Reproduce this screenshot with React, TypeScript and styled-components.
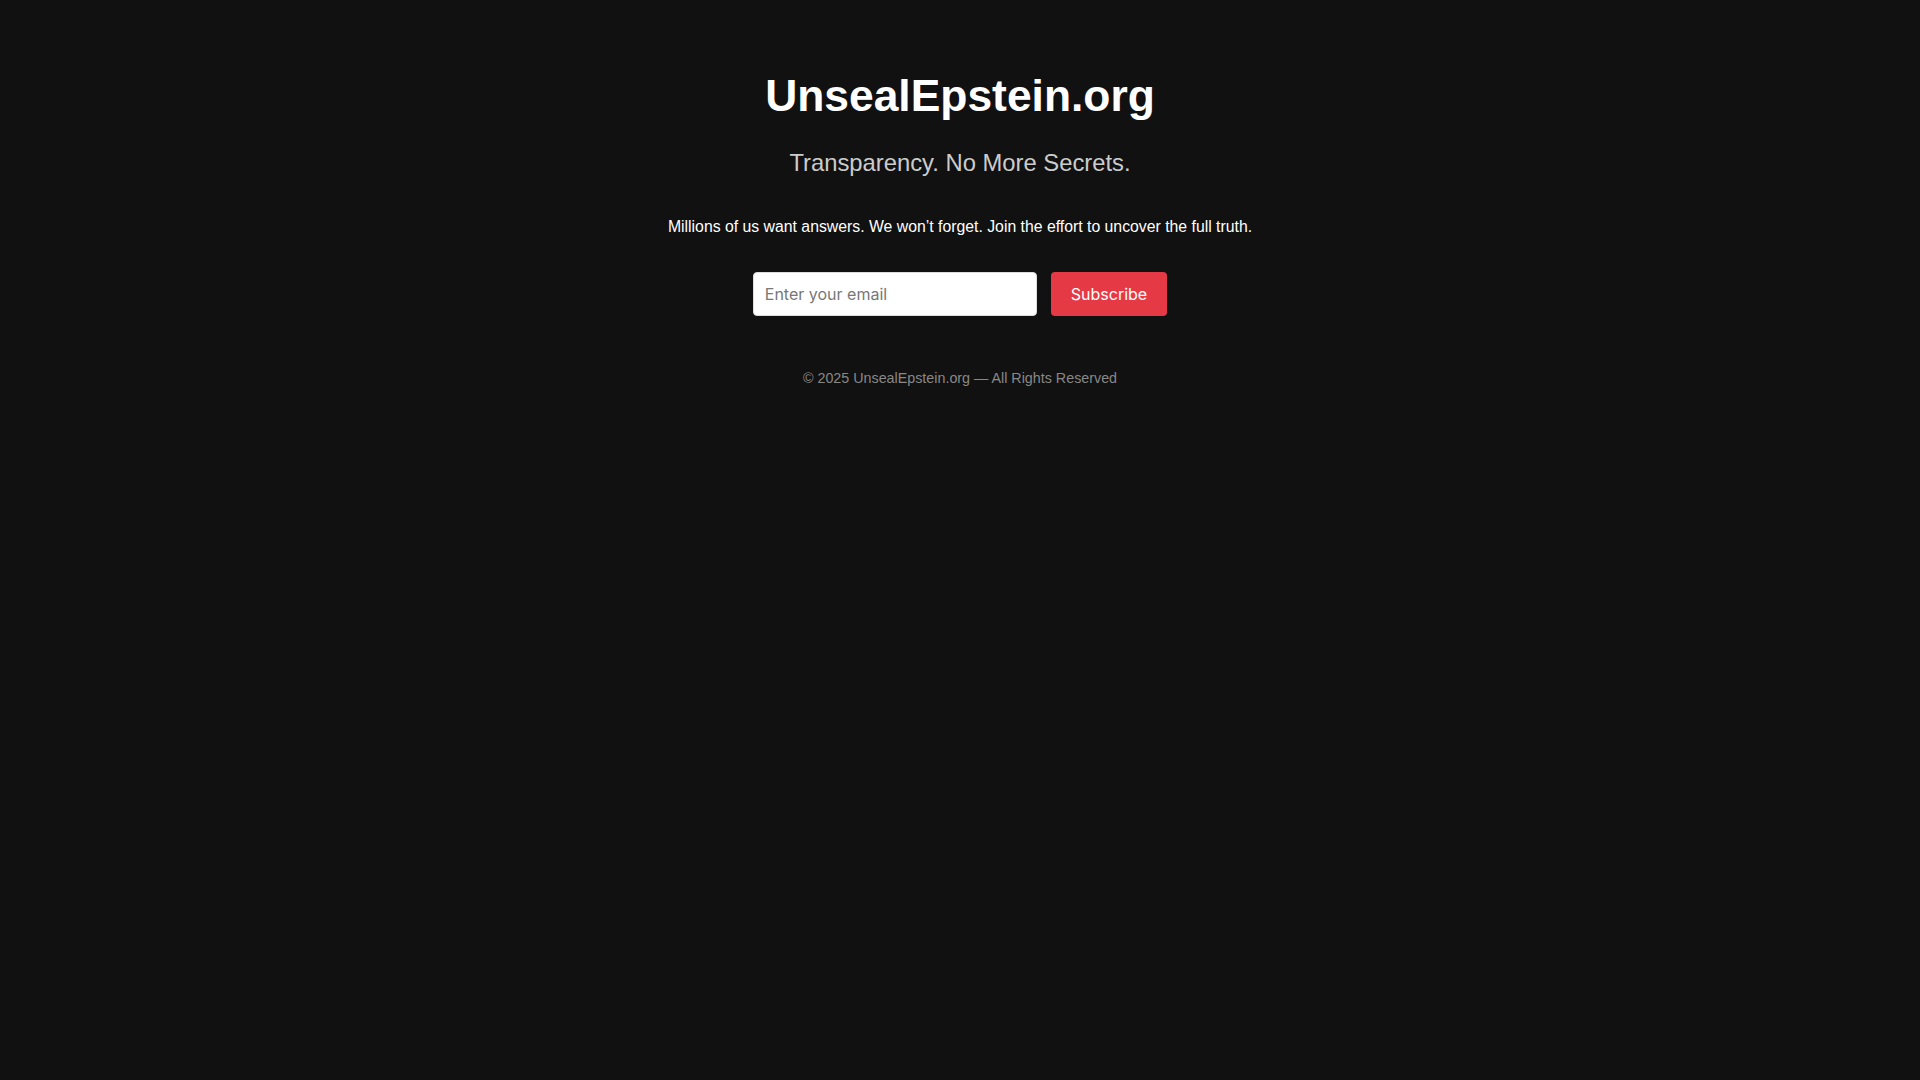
import * as React from 'react';
import styled, { createGlobalStyle } from 'styled-components';

const GlobalStyle = createGlobalStyle`
  html, body {
    margin: 0;
    padding: 0;
    background: #111111;
    min-height: 100%;
  }
  body {
    font-family: 'Liberation Sans', Arial, sans-serif;
    color: #ffffff;
  }
`;

const Page = styled.main`
  min-height: 100vh;
  display: flex;
  flex-direction: column;
  align-items: center;
  padding-top: 70px;
  box-sizing: border-box;
  text-align: center;
`;

const Title = styled.h1`
  margin: 0;
  font-size: 44.4px;
  line-height: 52px;
  font-weight: 700;
  color: #ffffff;
`;

const Tagline = styled.h2`
  margin: 27px 0 0;
  font-size: 23.8px;
  line-height: 28px;
  font-weight: 400;
  color: #cccccc;
`;

const Lead = styled.p`
  margin: 40px 0 0;
  font-size: 15.8px;
  line-height: 20px;
  color: #ffffff;
`;

const Form = styled.form`
  display: flex;
  gap: 14px;
  margin-top: 35px;
`;

const EmailInput = styled.input`
  width: 284px;
  height: 44px;
  box-sizing: border-box;
  padding: 0 11px;
  border: 1px solid #dddddd;
  border-radius: 4px;
  background: #ffffff;
  font-family: Inter, 'Noto Sans', sans-serif;
  font-size: 16px;
  color: #222222;
  outline: none;

  &::placeholder {
    color: #777777;
  }
`;

const SubmitButton = styled.button`
  height: 44px;
  padding: 0 20px;
  border: none;
  border-radius: 4px;
  background: #e63946;
  color: #ffffff;
  font-family: Inter, 'Noto Sans', sans-serif;
  font-size: 16px;
  cursor: pointer;
`;

const Footer = styled.footer`
  margin-top: 53px;
  font-size: 14.3px;
  line-height: 18px;
  color: #888888;
`;

export default function App() {
  const [email, setEmail] = React.useState('');

  return (
    <>
      <GlobalStyle />
      <Page>
        <Title>UnsealEpstein.org</Title>
        <Tagline>Transparency. No More Secrets.</Tagline>
        <Lead>
          Millions of us want answers. We won’t forget. Join the effort to
          uncover the full truth.
        </Lead>
        <Form onSubmit={e => e.preventDefault()}>
          <EmailInput
            type="email"
            placeholder="Enter your email"
            value={email}
            onChange={e => setEmail(e.target.value)}
          />
          <SubmitButton type="submit">Subscribe</SubmitButton>
        </Form>
        <Footer>© 2025 UnsealEpstein.org — All Rights Reserved</Footer>
      </Page>
    </>
  );
}
